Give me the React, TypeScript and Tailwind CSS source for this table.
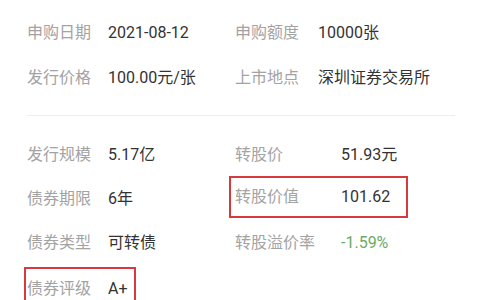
import * as React from "react";

type CellProps = {
  label: string;
  value: string;
  labelW: string;
  valueClass?: string;
  box?: string;
};

const Cell = ({ label, value, labelW, valueClass = "text-[#333]", box }: CellProps) => {
  const inner = (
    <>
      <span className={`${labelW} shrink-0 text-[#a3a3a3]`}>{label}</span>
      <span className={valueClass}>{value}</span>
    </>
  );
  return (
    <div className="flex items-center h-[44px]">
      {box ? (
        <div className={`flex items-center h-[42px] border-2 border-[#d73a3d] ${box}`}>{inner}</div>
      ) : (
        inner
      )}
    </div>
  );
};

export default function App() {
  return (
    <div
      className="w-[480px] h-[300px] overflow-hidden bg-white text-[16px] px-[27px] pt-[10px]"
      style={{ fontFamily: '"Roboto", "Noto Sans CJK SC", sans-serif' }}
    >
      {/* issue info */}
      <div className="grid grid-cols-[208px_1fr] [&>div]:h-[45px]">
        <Cell label="申购日期" value="2021-08-12" labelW="w-[81px]" />
        <Cell label="申购额度" value="10000张" labelW="w-[83px]" />
        <Cell label="发行价格" value="100.00元/张" labelW="w-[81px]" />
        <Cell label="上市地点" value="深圳证券交易所" labelW="w-[83px]" />
      </div>

      <div className="mt-[15px] h-px w-[428px] bg-[#eeeeee]" />

      {/* bond info */}
      <div className="mt-[17px] grid grid-cols-[208px_1fr]">
        <Cell label="发行规模" value="5.17亿" labelW="w-[81px]" />
        <Cell label="转股价" value="51.93元" labelW="w-[106px]" />
        <Cell label="债券期限" value="6年" labelW="w-[81px]" />
        <Cell
          label="转股价值"
          value="101.62"
          labelW="w-[106px]"
          box="w-[179px] -ml-[6px] pl-[4px] -mt-[4px]"
        />
        <Cell label="债券类型" value="可转债" labelW="w-[81px]" />
        <Cell label="转股溢价率" value="-1.59%" labelW="w-[106px]" valueClass="text-[#6aab66]" />
        <Cell
          label="债券评级"
          value="A+"
          labelW="w-[81px]"
          box="w-[112px] -ml-[3px] pl-[1px] mt-[4px] h-[44px]"
        />
      </div>
    </div>
  );
}
